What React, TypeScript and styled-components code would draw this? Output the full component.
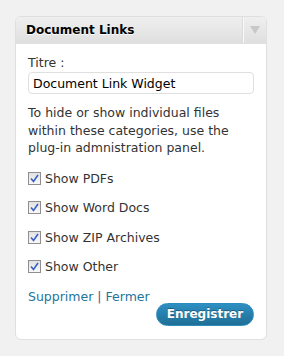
import React from "react";
import styled, { createGlobalStyle } from "styled-components";

const Global = createGlobalStyle`
  html, body { margin: 0; padding: 0; background: #f1f1f1; }
  body { font-family: "DejaVu Sans", Verdana, sans-serif; }
`;

const Page = styled.div`
  width: 284px;
  height: 356px;
  padding: 16px 17px 0 15px;
  box-sizing: border-box;
`;

const Panel = styled.div`
  background: #fff;
  border: 1px solid #dfdfdf;
  border-radius: 6px;
  height: 324px;
  box-sizing: border-box;
  overflow: hidden;
`;

const Header = styled.div`
  display: flex;
  align-items: stretch;
  height: 26px;
  background: linear-gradient(to bottom, #efefef, #dfdfdf);
  border-bottom: 1px solid #dfdfdf;
`;

const Title = styled.h3`
  flex: 1;
  margin: 0;
  padding-left: 10px;
  display: flex;
  align-items: center;
  font-size: 12px;
  font-weight: bold;
  color: #000;
  text-shadow: 0 1px 0 #fff;
`;

const Toggle = styled.div`
  width: 22px;
  border-left: 1px solid #f9f9f9;
  box-shadow: -1px 0 0 #dcdcdc;
  display: flex;
  align-items: center;
  justify-content: center;
`;

const Body = styled.div`
  padding: 11px 12px 0 12px;
  display: flex;
  flex-direction: column;
  font-size: 12.5px;
  color: #333;
`;

const Label = styled.label`
  line-height: 16px;
`;

const Input = styled.input`
  margin-top: 1px;
  height: 22px;
  box-sizing: border-box;
  border: 1px solid #dfdfdf;
  border-radius: 4px;
  padding: 0 4px;
  font-family: "DejaVu Sans", Verdana, sans-serif;
  font-size: 12.5px;
  color: #000;
  outline: none;
`;

const Para = styled.p`
  margin: 10px 0 7px;
  line-height: 17.5px;
`;

const CheckRow = styled.label`
  display: flex;
  align-items: center;
  height: 29.5px;
  gap: 4px;
`;

const Box = styled.span`
  width: 11px;
  height: 11px;
  border: 1px solid #8f8f8f;
  background: linear-gradient(to bottom, #e2e2e2, #f8f8f8);
  display: flex;
  align-items: center;
  justify-content: center;
`;

const Links = styled.div`
  margin-top: 7px;
  line-height: 16px;
  color: #21759b;
`;

const Link = styled.a`
  color: #21759b;
  text-decoration: none;
`;

const Sep = styled.span`
  color: #7a3c8c;
  padding: 0 4px;
`;

const Footer = styled.div`
  display: flex;
  justify-content: flex-end;
  margin-top: -2px;
`;

const Button = styled.button`
  width: 98px;
  height: 23px;
  border-radius: 12px;
  border: 1px solid #298cba;
  background: linear-gradient(to bottom, #2e8fc2, #1f6f96);
  color: #fff;
  font-family: "DejaVu Sans", Verdana, sans-serif;
  font-size: 12px;
  font-weight: bold;
  text-shadow: 0 -1px 0 rgba(0,0,0,0.3);
  padding: 0;
`;

const items = ["Show PDFs", "Show Word Docs", "Show ZIP Archives", "Show Other"];

export default function App() {
  return (
    <>
      <Global />
      <Page>
        <Panel>
          <Header>
            <Title>Document Links</Title>
            <Toggle>
              <svg width="10" height="8" viewBox="0 0 10 8">
                <path d="M0 0 L10 0 L5 8 Z" fill="#c8c8c8" />
              </svg>
            </Toggle>
          </Header>
          <Body>
            <Label>Titre :</Label>
            <Input defaultValue="Document Link Widget" />
            <Para>
              To hide or show individual files within these categories, use the plug-in admnistration panel.
            </Para>
            {items.map((t) => (
              <CheckRow key={t}>
                <Box>
                  <svg width="9" height="9" viewBox="0 0 9 9">
                    <path d="M1 4.5 L3.5 7.5 L8 1" stroke="#3b5ec8" strokeWidth="1.6" fill="none" />
                  </svg>
                </Box>
                {t}
              </CheckRow>
            ))}
            <Links>
              <Link href="#">Supprimer</Link>
              <Sep>|</Sep>
              <Link href="#">Fermer</Link>
            </Links>
            <Footer>
              <Button>Enregistrer</Button>
            </Footer>
          </Body>
        </Panel>
      </Page>
    </>
  );
}
